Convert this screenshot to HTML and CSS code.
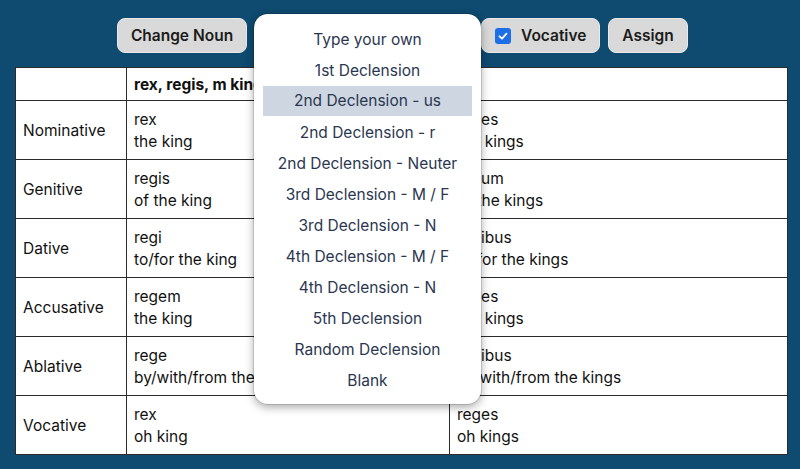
FILE: index.html
```html
<!DOCTYPE html>
<html>
<head>
<meta charset="utf-8">
<link rel="stylesheet" href="styles.css">
</head>
<body>
<div class="page">
  <div class="toolbar">
    <button class="btn btn-change">Change Noun</button>
    <div class="select-wrap">
      <div class="btn btn-select"></div>
      <div class="menu">
        <div class="item">Type your own</div>
        <div class="item">1st Declension</div>
        <div class="item active">2nd Declension - us</div>
        <div class="item">2nd Declension - r</div>
        <div class="item">2nd Declension - Neuter</div>
        <div class="item">3rd Declension - M / F</div>
        <div class="item">3rd Declension - N</div>
        <div class="item">4th Declension - M / F</div>
        <div class="item">4th Declension - N</div>
        <div class="item">5th Declension</div>
        <div class="item">Random Declension</div>
        <div class="item">Blank</div>
      </div>
    </div>
    <label class="btn btn-voc"><span class="check"><svg viewBox="0 0 16 16" width="16" height="16"><path d="M4.5 8.3 L7 10.6 L11.5 5.6" fill="none" stroke="#fff" stroke-width="1.8" stroke-linecap="round" stroke-linejoin="round"/></svg></span>Vocative</label>
    <button class="btn btn-assign">Assign</button>
  </div>
  <table class="grid">
    <colgroup><col class="c1"><col class="c2"><col class="c3"></colgroup>
    <tr class="head"><td></td><td>rex, regis, m king</td><td></td></tr>
    <tr><td class="lab">Nominative</td><td>rex<br>the king</td><td>reges<br>the kings</td></tr>
    <tr><td class="lab">Genitive</td><td>regis<br>of the king</td><td>regum<br>of the kings</td></tr>
    <tr><td class="lab">Dative</td><td>regi<br>to/for the king</td><td>regibus<br>to/for the kings</td></tr>
    <tr><td class="lab">Accusative</td><td>regem<br>the king</td><td>reges<br>the kings</td></tr>
    <tr><td class="lab">Ablative</td><td>rege<br>by/with/from the king</td><td>regibus<br>by/with/from the kings</td></tr>
    <tr><td class="lab">Vocative</td><td>rex<br>oh king</td><td>reges<br>oh kings</td></tr>
  </table>
</div>
</body>
</html>
```

FILE: styles.css
```css
html, body {
  margin: 0;
  padding: 0;
  background: #0f4a70;
}
.page {
  width: 800px;
  height: 469px;
  background: #0f4a70;
  font-family: Inter, "Noto Sans", sans-serif;
  overflow: hidden;
}
.toolbar {
  display: flex;
  justify-content: center;
  align-items: center;
  gap: 8px;
  padding: 18px 0 14px 5px;
  height: 35px;
}
.btn {
  box-sizing: border-box;
  height: 35px;
  border: 1px solid #e9e9e9;
  border-radius: 8px;
  background: #d9d9d9;
  color: #1b1b1b;
  font-family: Inter, "Liberation Sans", sans-serif;
  font-weight: 600;
  font-size: 15.5px;
  display: flex;
  align-items: center;
  justify-content: center;
  padding: 0 10px;
}
.btn-change { width: 130px; }
.btn-select { width: 218px; }
.btn-voc { width: 119px; justify-content: flex-start; padding-left: 13px; }
.btn-assign { width: 80px; }
.check {
  width: 16px;
  height: 16px;
  border-radius: 3px;
  background: #1e6fe6;
  display: inline-block;
  margin-right: 10px;
  flex: none;
}
.check svg { display: block; }
.select-wrap {
  position: relative;
}
.menu {
  position: absolute;
  left: -1px;
  top: -4px;
  width: 227px;
  box-sizing: border-box;
  padding: 10px 9px 8px;
  background: #fff;
  border-radius: 14px;
  box-shadow: 0 3px 10px rgba(0,0,0,0.35), 0 0 0 1px rgba(0,0,0,0.12);
  z-index: 10;
}
.item {
  height: 31px;
  line-height: 31px;
  text-align: center;
  font-family: Inter, sans-serif;
  font-size: 15.5px;
  color: #2b3650;
  white-space: nowrap;
}
.item.active {
  background: #cdd6e1;
  height: 30px;
  line-height: 30px;
  margin-bottom: 1px;
}
.grid {
  margin-left: 15px;
  width: 772px;
  border-collapse: collapse;
  background: #fff;
  table-layout: fixed;
  font-family: Inter, sans-serif;
  font-size: 15.5px;
  color: #111;
}
.c1 { width: 111px; }
.c2 { width: 323px; }
.c3 { width: 338px; }
.grid td {
  border: 1px solid #2a2a2a;
  padding: 8px 7px 6px;
  line-height: 22px;
  vertical-align: middle;
  white-space: nowrap;
  overflow: hidden;
}
.grid tr { height: 59px; }
.grid tr.head { height: 33px; }
.grid tr.head td { font-weight: 700; padding-top: 5px; padding-bottom: 3px; }
```
